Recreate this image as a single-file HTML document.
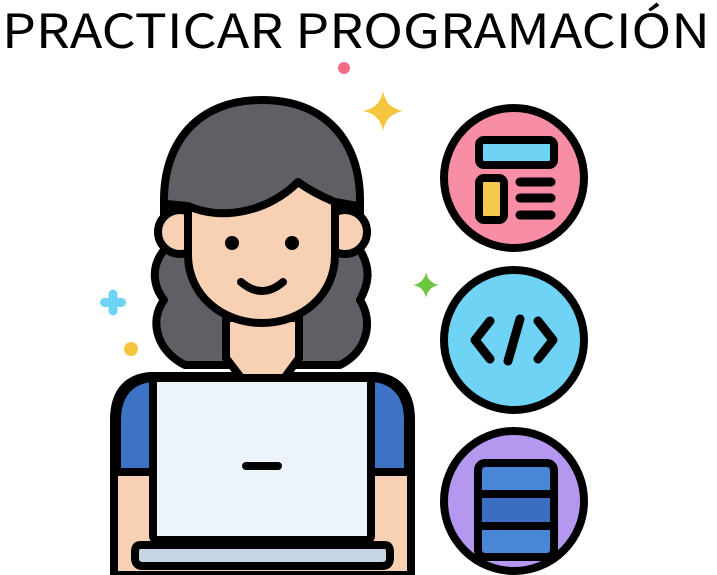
<!DOCTYPE html>
<html><head><meta charset="utf-8"><style>
html,body{margin:0;padding:0;background:#fff;width:717px;height:575px;overflow:hidden}
svg{display:block}
</style></head><body>
<svg width="717" height="575" viewBox="0 0 717 575" xmlns="http://www.w3.org/2000/svg">
<text x="2" y="48" font-family="'Noto Sans CJK JP','DejaVu Sans',sans-serif" font-weight="400" font-size="47" textLength="708" lengthAdjust="spacingAndGlyphs" fill="#000">PRACTICAR PROGRAMACIÓN</text>

<!-- sparkles -->
<circle cx="344" cy="68" r="6" fill="#f06a80"/>
<path d="M383,91 Q386,108 403,111 Q386,114 383,131 Q380,114 363,111 Q380,108 383,91Z" fill="#f5c53e"/>
<path d="M426,272 Q428,283 439,285 Q428,287 426,298 Q424,287 413,285 Q424,283 426,272Z" fill="#6cc63e"/>
<path d="M113,294 V311 M104.5,302.5 H121.5" stroke="#6ed3f5" stroke-width="9" stroke-linecap="round"/>
<circle cx="131" cy="349" r="7" fill="#f5c53e"/>

<g stroke="#000" stroke-width="8" stroke-linejoin="round" stroke-linecap="round">
<path d="M262,100 C198,100 164,142 164,200 L164,250 C148,270 156,290 164,300 C148,322 158,352 185,365 L340,365 C367,352 374,322 360,300 C368,285 372,270 360,250 L360,200 C360,142 326,100 262,100Z" fill="#5f6065"/>
<path d="M150,376 C125,378 114,395 114,420 L114,575 L411,575 L411,420 C411,395 400,378 375,376 Z" fill="#f8d0b4"/>
<path d="M117,472 L117,420 C117,397 128,380 152,378 L373,378 C397,380 408,397 408,420 L408,472 Z" fill="#3e72c4"/>
<path d="M226,318 L226,358 L252,392 L274,392 L299,358 L299,318 Z" fill="#f8d0b4"/>
<circle cx="180" cy="232" r="22" fill="#f8d0b4"/>
<circle cx="345" cy="232" r="22" fill="#f8d0b4"/>
<path d="M188,206 C225,222 270,210 298,182 C312,192 325,198 335,202 L335,255 C335,295 302,323 262,323 C222,323 188,295 188,255 Z" fill="#f8d0b4"/>
<path d="M166,204 L188,206 M335,202 L358,206" fill="none"/>
<path d="M241,282 Q262,300 283,282" fill="none"/>
<rect x="153" y="378" width="218" height="162" rx="4" fill="#edf3fb"/>
<path d="M140,545 L385,545 Q390,545 390,552 L390,558 Q390,566 382,566 L143,566 Q135,566 135,558 L135,552 Q135,545 140,545Z" fill="#c7d6e4"/>
<path d="M246,466 H278"/>
</g>
<circle cx="232" cy="243" r="7" fill="#000"/>
<circle cx="292" cy="243" r="7" fill="#000"/>

<g stroke="#000" stroke-width="8" stroke-linejoin="round" stroke-linecap="round">
<circle cx="514" cy="178" r="70" fill="#f78ea5"/>
<rect x="479" y="140" width="75" height="25" rx="5" fill="#6ed3f5"/>
<rect x="479" y="178" width="25" height="42" rx="5" fill="#f5c84e"/>
<path d="M520,182 H551 M520,198 H551 M520,215 H551" stroke-width="9"/>

<circle cx="514" cy="340" r="70" fill="#6ed3f5"/>
<path d="M490,321 L475,340 L490,359 M538,321 L553,340 L538,359 M520,319 L508,361" fill="none" stroke-width="9"/>

<circle cx="514" cy="501" r="70" fill="#b597f0"/>
<rect x="478" y="463" width="76" height="94" rx="7" fill="#4a86d6"/>
<rect x="482" y="493" width="68" height="33" fill="#3a6cbf" stroke="none"/>
<path d="M478,494 H554 M478,526 H554"/>
</g>
</svg>
</body></html>
